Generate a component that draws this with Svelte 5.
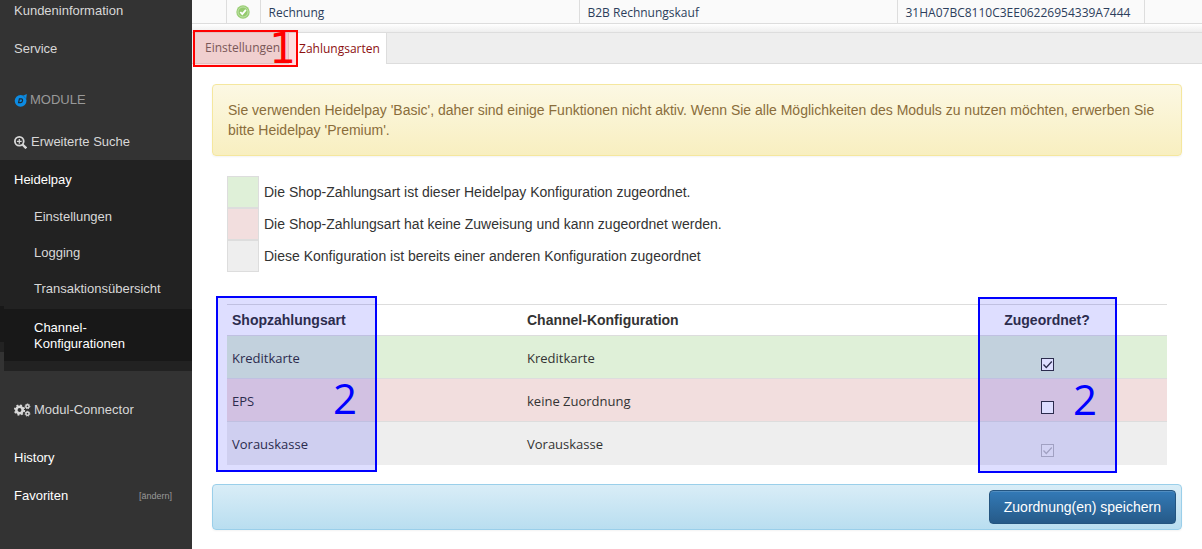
<script>
  const channels = [
    { name: 'Rechnung', kind: 'B2B Rechnungskauf', id: '31HA07BC8110C3EE06226954339A7444' }
  ];
  const subItems = ['Einstellungen', 'Logging', 'Transaktionsübersicht'];
  const legend = [
    { tone: 'green', text: 'Die Shop-Zahlungsart ist dieser Heidelpay Konfiguration zugeordnet.' },
    { tone: 'red', text: 'Die Shop-Zahlungsart hat keine Zuweisung und kann zugeordnet werden.' },
    { tone: 'grey', text: 'Diese Konfiguration ist bereits einer anderen Konfiguration zugeordnet' }
  ];
  let rows = $state([
    { tone: 'green', name: 'Kreditkarte', config: 'Kreditkarte', checked: true, disabled: false },
    { tone: 'red', name: 'EPS', config: 'keine Zuordnung', checked: false, disabled: false },
    { tone: 'grey', name: 'Vorauskasse', config: 'Vorauskasse', checked: true, disabled: true }
  ]);
</script>

<div class="page">
  <nav class="sidebar">
    <a class="item" href="#kunden">Kundeninformation</a>
    <a class="item" href="#service">Service</a>
    <div class="item heading">
      <svg width="13" height="13" viewBox="0 0 13 13" aria-hidden="true">
        <circle cx="6.600" cy="6.800" r="5.900" fill="#0c8ce4" />
        <path d="M8.500 2 12.800 0 12.200 5z" fill="#0c8ce4" />
        <path d="M5.400 4.900h2q1.500.2 1.100 1.900T6.400 8.700H4.600z" fill="none" stroke="#1d2c38" stroke-width="1.200" />
        <path d="m9.500 2 2 2.200" stroke="#2a5270" stroke-width=".5" />
      </svg>
      <span>MODULE</span>
    </div>
    <a class="item search" href="#suche">
      <svg width="13" height="13" viewBox="0 0 13 13" aria-hidden="true" fill="none" stroke="#d8d8d8">
        <circle cx="5.300" cy="5.300" r="4.400" stroke-width="1.800" />
        <path d="m8.500 8.500 3.800 3.800" stroke-width="2.400" />
        <path d="M2.900 5.300h4.800M5.300 2.900v4.800" stroke-width="1.200" />
      </svg>
      <span>Erweiterte Suche</span>
    </a>
    <div class="group">
      <a class="item strong" href="#heidelpay">Heidelpay</a>
      {#each subItems as label}
        <a class="sub" href="#{label}">{label}</a>
      {/each}
      <a class="sub current" href="#channel">Channel-<br />Konfigurationen</a>
    </div>
    <a class="item connector" href="#connector">
      <svg width="17" height="14" viewBox="0 0 17 14" aria-hidden="true" fill="none" stroke="#d8d8d8">
        <circle cx="5.500" cy="7" r="3.200" stroke-width="2.600" />
        <circle cx="5.500" cy="7" r="4.700" stroke-width="1.900" stroke-dasharray="1.850 1.850" />
        <circle cx="13.500" cy="3.300" r="1.600" stroke-width="1.500" />
        <circle cx="13.500" cy="3.300" r="2.400" stroke-width="1" stroke-dasharray="1 .9" />
        <circle cx="13.500" cy="10.700" r="1.600" stroke-width="1.500" />
        <circle cx="13.500" cy="10.700" r="2.400" stroke-width="1" stroke-dasharray="1 .9" />
      </svg>
      <span>Modul-Connector</span>
    </a>
    <a class="item strong history" href="#history">History</a>
    <div class="item strong favorites">
      <span>Favoriten</span>
      <a class="edit" href="#edit">[ändern]</a>
    </div>
  </nav>

  <main>
    <table class="channels">
      <colgroup>
        <col class="c-select" /><col class="c-state" /><col class="c-name" /><col class="c-kind" /><col class="c-id" /><col />
      </colgroup>
      <tbody>
        {#each channels as channel}
          <tr>
            <td></td>
            <td class="state">
              <svg width="14" height="14" viewBox="0 0 14 14" role="img" aria-label="aktiv">
                <circle cx="7" cy="7" r="6.700" fill="#9bcf76" />
                <circle cx="7" cy="7" r="5" fill="#94ca6d" stroke="#c9e6b6" stroke-width=".8" />
                <path d="m4.300 7 2 2.200 3.600-4.300" fill="none" stroke="#fff" stroke-width="1.800" />
              </svg>
            </td>
            <td>{channel.name}</td>
            <td>{channel.kind}</td>
            <td>{channel.id}</td>
            <td></td>
          </tr>
        {/each}
      </tbody>
    </table>
    <div class="splitter"></div>
    <div class="tabs" role="tablist">
      <button class="tab" role="tab" aria-selected="false">Einstellungen</button>
      <button class="tab active" role="tab" aria-selected="true">Zahlungsarten</button>
      <div class="marker one">1</div>
    </div>

    <section class="content">
      <p class="notice">
        Sie verwenden Heidelpay 'Basic', daher sind einige Funktionen nicht aktiv. Wenn Sie alle Möglichkeiten des Moduls
        zu nutzen möchten, erwerben Sie bitte Heidelpay 'Premium'.
      </p>
      <ul class="legend">
        {#each legend as entry}
          <li><span class="swatch {entry.tone}"></span>{entry.text}</li>
        {/each}
      </ul>
      <div class="assign">
        <table class="payments">
          <thead>
            <tr><th>Shopzahlungsart</th><th>Channel-Konfiguration</th><th class="check">Zugeordnet?</th></tr>
          </thead>
          <tbody>
            {#each rows as row}
              <tr class={row.tone}>
                <td>{row.name}</td>
                <td>{row.config}</td>
                <td class="check">
                  <input type="checkbox" aria-label="{row.name} zugeordnet" bind:checked={row.checked} disabled={row.disabled} />
                </td>
              </tr>
            {/each}
          </tbody>
        </table>
        <div class="marker two first">2</div>
        <div class="marker two last">2</div>
      </div>
      <div class="actions">
        <button class="save">Zuordnung(en) speichern</button>
      </div>
    </section>
  </main>
</div>

<style>
  :global(body) {
    margin: 0;
    background: #fff;
  }
  .page {
    display: flex;
    min-height: 100vh;
    overflow: hidden;
    font: 14px/20px 'Liberation Sans', Arial, sans-serif;
    color: #333;
  }
  .page * {
    box-sizing: border-box;
  }
  a {
    color: inherit;
    text-decoration: none;
  }
  svg {
    flex: none;
  }
  .sidebar {
    flex: 0 0 192px;
    min-width: 0;
    display: flex;
    flex-direction: column;
    background: #333;
    color: #d8d8d8;
    font-size: 13px;
    line-height: 16px;
  }
  .item {
    display: flex;
    align-items: center;
    gap: 4px;
    padding: 3px 14px 19px;
  }
  .heading {
    padding-top: 16px;
    padding-bottom: 13px;
    color: #999;
    gap: 3px;
  }
  .search {
    padding-top: 13px;
    padding-bottom: 10px;
  }
  .strong {
    color: #fff;
  }
  .group {
    position: relative;
    display: flex;
    flex-direction: column;
    background: #222;
    padding-bottom: 10px;
  }
  .group::after {
    content: '';
    position: absolute;
    left: 0;
    bottom: 0;
    width: 4px;
    height: 65px;
    background: linear-gradient(#181818 36px, #222 36px 46px, #333 46px);
  }
  .group .item {
    padding: 12px 14px 11px;
  }
  .sub {
    padding: 10px 20px 10px 34px;
  }
  .sub.current {
    margin-top: 2px;
    padding-top: 11px;
    padding-bottom: 9px;
    background: #181818;
    color: #fff;
  }
  .connector {
    padding-top: 31px;
    gap: 3px;
    padding-bottom: 16px;
  }
  .history {
    padding-top: 16px;
  }
  .favorites {
    justify-content: space-between;
    padding-right: 20px;
  }
  .edit {
    font-size: 9px;
    color: #999;
  }
  main {
    flex: 1;
    min-width: 0;
  }
  .channels {
    width: 100%;
    table-layout: fixed;
    border-collapse: collapse;
    background: #fafafa;
    color: #2c3e5c;
    font: 12px/16px 'Open Sans', 'Noto Sans', sans-serif;
  }
  .c-select {
    width: 34px;
  }
  .c-state {
    width: 34px;
  }
  .c-name {
    width: 319px;
  }
  .c-kind {
    width: 318px;
  }
  .c-id {
    width: 247px;
  }
  .channels td {
    padding: 5px 8px 2px;
    border: 1px solid #ddd;
    border-top: 0;
    white-space: nowrap;
  }
  .channels td:first-child {
    border-left: 0;
  }
  .channels td:last-child {
    border-right: 0;
  }
  .channels .state {
    padding: 0;
    text-align: center;
  }
  .state svg {
    display: block;
    margin: auto;
  }
  .splitter {
    height: 8px;
    background: linear-gradient(#fff, #eee);
  }
  .tabs {
    position: relative;
    display: flex;
    height: 32px;
    background: #eee;
    border: solid #ddd;
    border-width: 1px 0;
  }
  .tab {
    height: 30px;
    padding: 0 6px 0 10px;
    border: 0;
    border-right: 1px solid #ddd;
    background: transparent;
    color: #666;
    font: 12px/30px 'Open Sans', 'Noto Sans', sans-serif;
  }
  .tab:first-child {
    flex: 0 0 97px;
    padding: 0 0 0 13px;
    text-align: left;
  }
  .tab.active {
    flex: 0 0 98px;
    height: 31px;
    background: #fff;
    color: #8c1010;
  }
  .marker {
    position: absolute;
    border: 2px solid;
    pointer-events: none;
    font-family: 'Open Sans', sans-serif;
  }
  .one {
    left: 1px;
    top: -3px;
    width: 105px;
    height: 37px;
    color: #f00;
    background: rgba(255, 0, 0, 0.13);
    font: 42px/33px 'DejaVu Sans', sans-serif;
    text-align: right;
  }
  .two {
    color: #00f;
    background: rgba(0, 0, 255, 0.13);
    font-size: 42px;
    line-height: 200px;
  }
  .first {
    top: -8px;
    left: -11px;
    width: 161px;
    height: 176px;
    padding-left: 115px;
  }
  .last {
    top: -7px;
    right: 50px;
    width: 139px;
    height: 176px;
    padding-left: 93px;
  }
  .content {
    padding: 20px;
  }
  .notice {
    margin: 0 0 20px;
    padding: 15px;
    border: 1px solid #f5e79e;
    border-radius: 4px;
    background: linear-gradient(#fcf8e3, #f8efc0);
    box-shadow: 0 1px 2px rgba(0, 0, 0, 0.05);
    color: #8a6d3b;
  }
  .legend {
    margin: 0;
    padding: 0 15px;
    list-style: none;
  }
  .legend li {
    display: flex;
    align-items: center;
    gap: 5px;
  }
  .swatch {
    width: 32px;
    height: 32px;
    border: 1px solid #ddd;
  }
  .green {
    background: #dff0d8;
  }
  .red {
    background: #f2dede;
  }
  .grey {
    background: #eee;
  }
  .assign {
    position: relative;
    margin: 32px 15px 19px;
  }
  .payments {
    width: 100%;
    border-collapse: collapse;
    table-layout: fixed;
    font: 13px/20px 'Open Sans', 'Noto Sans', sans-serif;
  }
  .payments th {
    width: 295px;
    padding: 5px;
    border-top: 1px solid #ddd;
    font: bold 14px/20px 'Liberation Sans', Arial, sans-serif;
    text-align: left;
  }
  .payments th:nth-child(2) {
    width: auto;
  }
  .payments th.check {
    width: 240px;
  }
  .payments td {
    height: 43px;
    padding: 7px 5px 5px;
    border-top: 1px solid #ddd;
  }
  .payments .check {
    text-align: center;
  }
  .payments input {
    appearance: none;
    display: block;
    width: 13px;
    height: 13px;
    margin: 12px auto 0;
    border: 1px solid #333;
    background: #fff;
  }
  .payments input:checked {
    background: #fff
      url("data:image/svg+xml,%3Csvg xmlns='http://www.w3.org/2000/svg' viewBox='0 0 11 11'%3E%3Cpath d='M1.500 5.500 4.300 8.500 9.800 2.500' fill='none' stroke='%23333' stroke-width='1.300'/%3E%3C/svg%3E");
  }
  .payments input:disabled {
    opacity: 0.28;
  }
  .actions {
    display: flex;
    justify-content: flex-end;
    padding: 5px;
    border: 1px solid #9acfea;
    border-radius: 4px;
    background: linear-gradient(#d9edf7, #b9def0);
    box-shadow: 0 1px 2px rgba(0, 0, 0, 0.05);
  }
  .save {
    height: 34px;
    padding: 0 14px;
    border: 1px solid #245580;
    border-radius: 4px;
    background: linear-gradient(#337ab7, #265a88);
    box-shadow: inset 0 1px 0 rgba(255, 255, 255, 0.15);
    color: #fff;
    font: 14px/20px 'Liberation Sans', Arial, sans-serif;
  }
</style>
